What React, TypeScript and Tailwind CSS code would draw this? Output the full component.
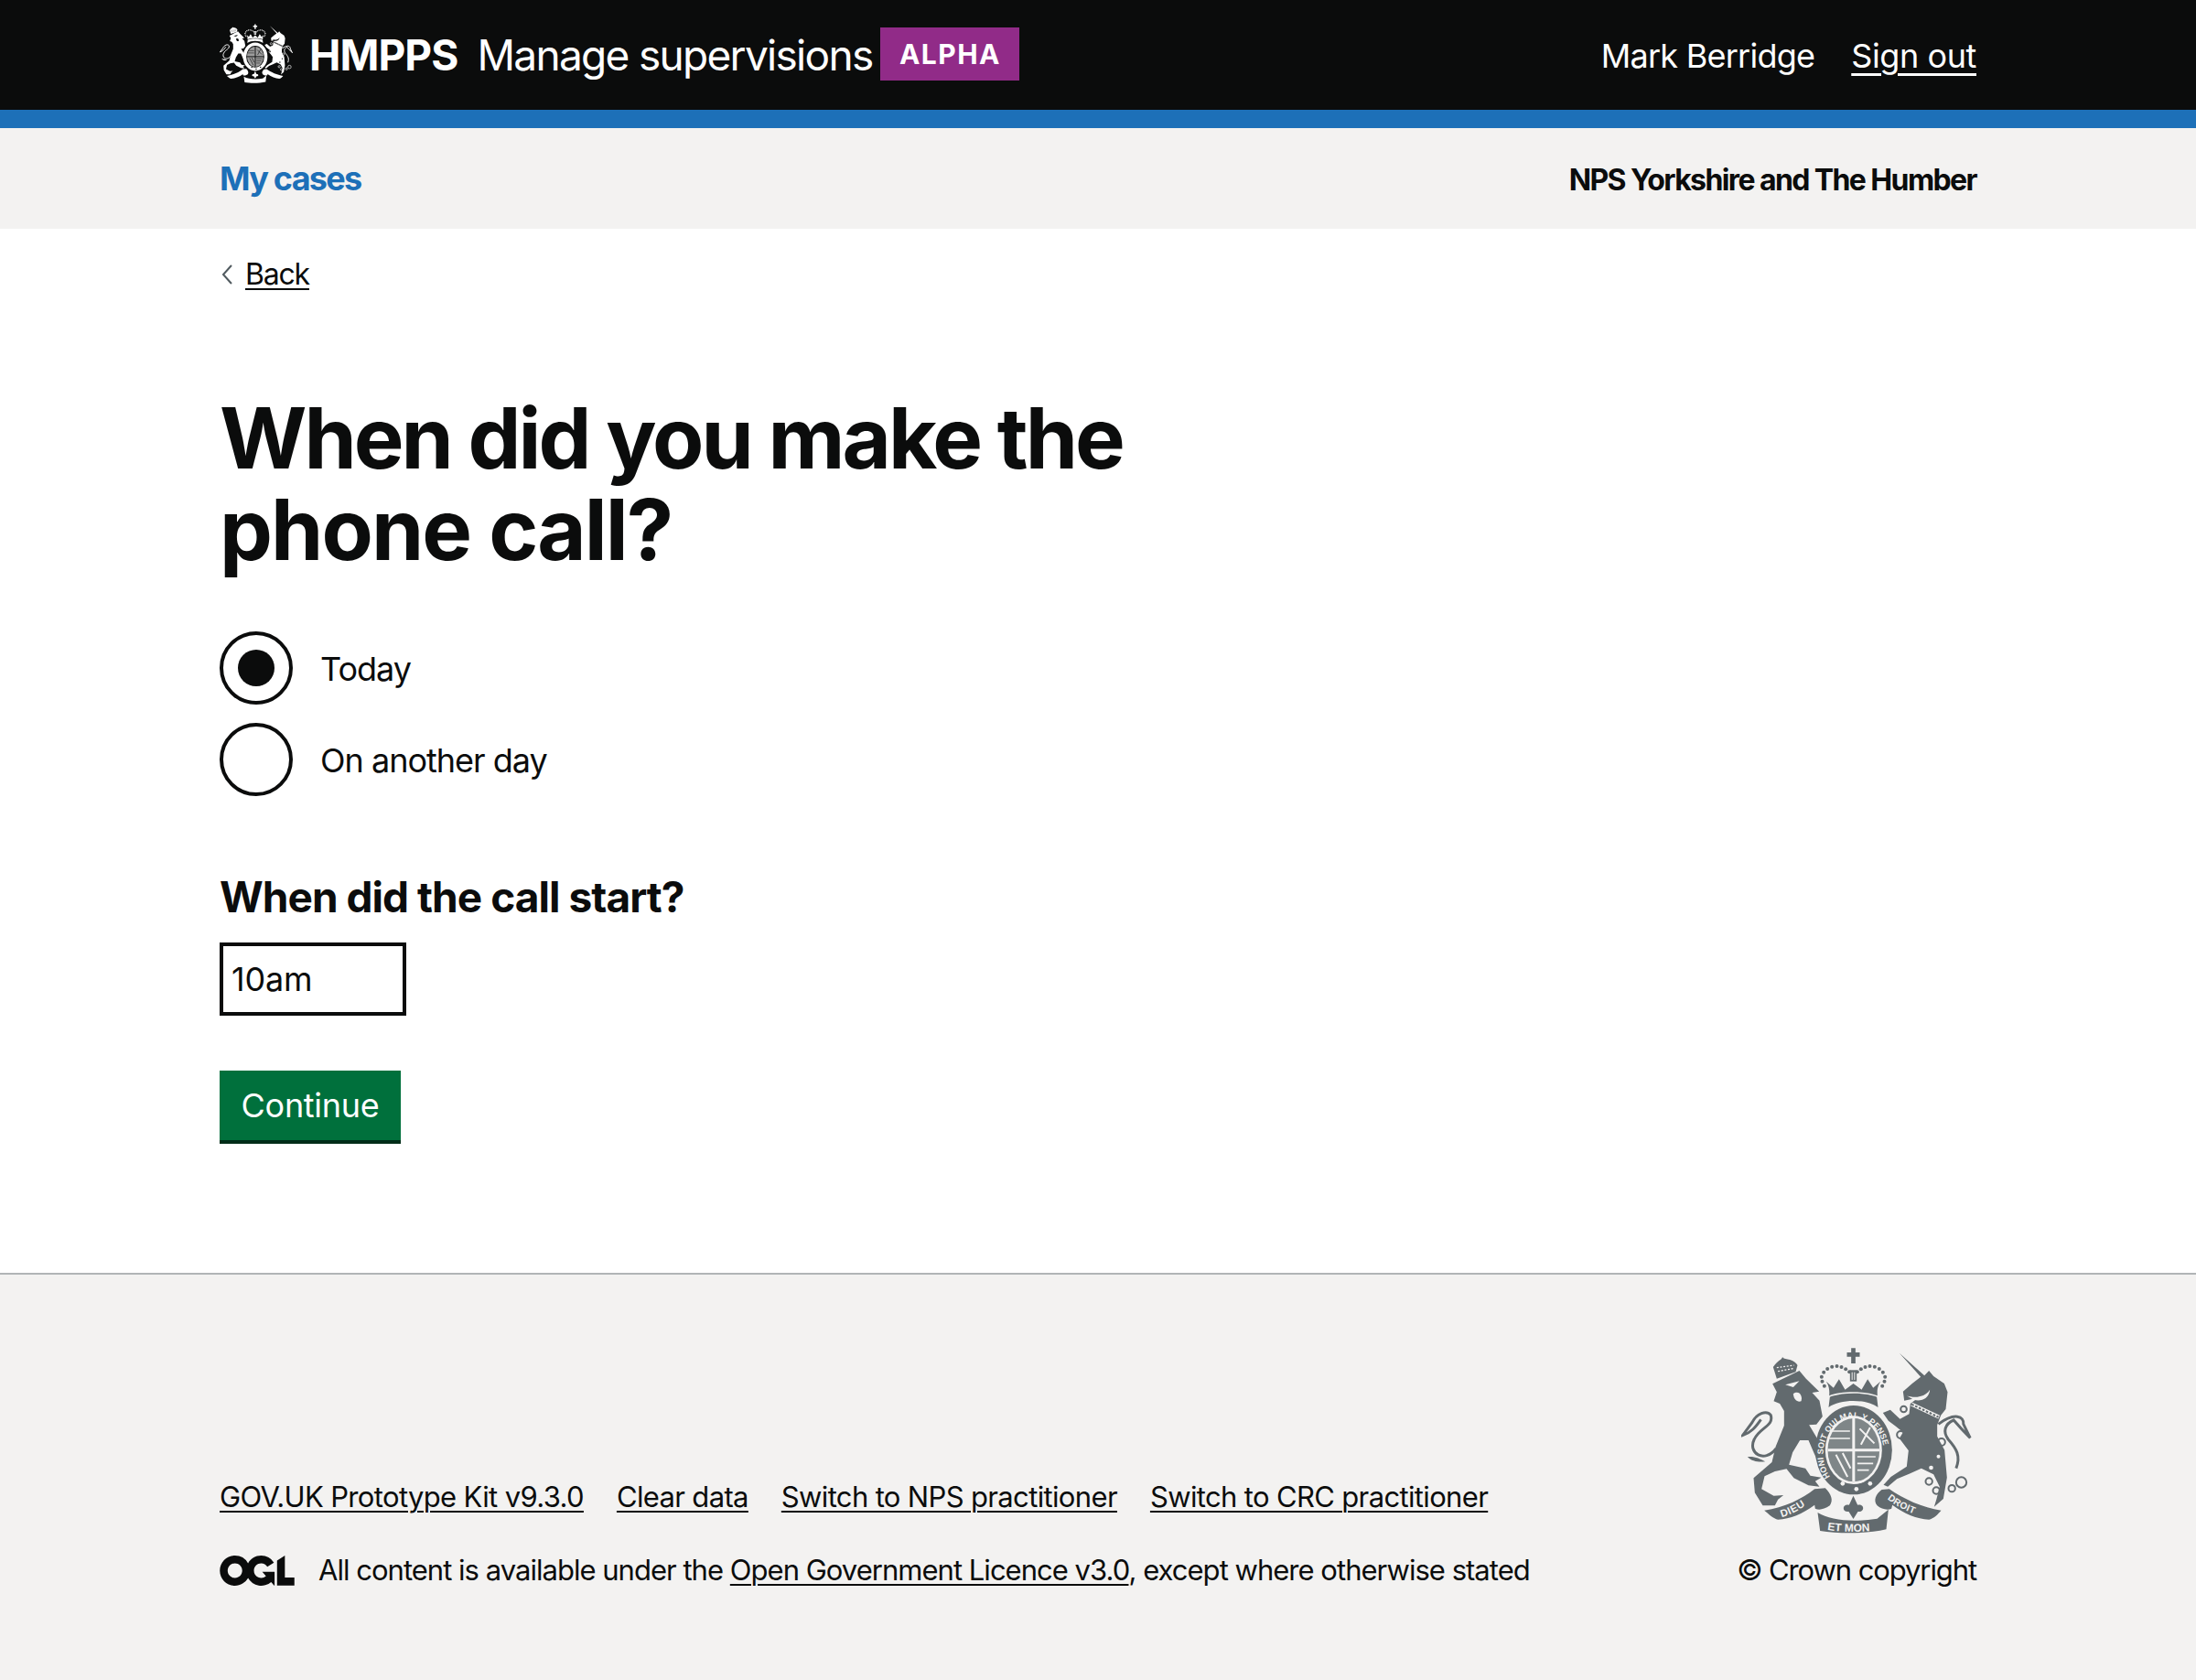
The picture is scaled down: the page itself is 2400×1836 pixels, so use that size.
const FONT = "font-['Inter','Noto_Sans',sans-serif]"

// hand drawn royal arms, coordinates are traced from the footer logo
function Crest({ className, bg, detail }: { className: string; bg: string; detail?: boolean }) {
  const dots = [
    [395, 205], [393, 190], [400, 175], [412, 164], [427, 157], [443, 155], [458, 158], [472, 165], [484, 174],
    [599, 205], [601, 190], [594, 175], [582, 164], [567, 157], [551, 155], [536, 158], [522, 165], [510, 174],
    [402, 220], [592, 220],
  ]
  const motto = { fill: bg, fontWeight: 700, fontFamily: 'Liberation Sans, sans-serif' }
  return (
    <svg viewBox="130 95 755 615" className={className} fill="currentColor">
      {/* lion */}
      <path d="M232 213 L320 170 L342 196 L385 238 L362 242 L386 268 L396 320 L376 346 L352 348 L405 436 L398 458 L380 466 L368 440 L350 398 L322 398 L298 438 L286 478 L340 490 L356 514 L392 520 L372 532 L386 550 L350 546 L302 522 L278 492 L240 500 L206 516 L196 558 L236 580 L268 578 L250 592 L240 612 L200 612 L174 570 L170 522 L230 470 L242 420 L270 350 L270 302 L256 278 L236 270 L246 240 Z" />
      <path d="M274 216 L320 204 L300 224 Z" fill={bg} />
      <path d="M300 246 C316 234 332 248 326 270 C312 274 302 264 300 246 Z" fill={bg} />
      <path d="M244 425 C205 475 150 440 172 395 C190 355 238 352 226 315 C212 298 180 310 165 340 L134 382 C165 372 178 352 194 330" fill="none" stroke="currentColor" strokeWidth="9" />
      <path d="M150 452 C175 450 190 458 208 468 C185 470 165 468 150 452 Z" />
      {/* lion crown */}
      <path d="M234 158 C250 135 262 135 265 125 C268 135 300 128 314 152 L308 174 L246 196 Z" />
      <path d="M246 160 L302 152 M250 172 L304 162" fill="none" stroke={bg} strokeWidth="4" strokeDasharray="6 5" />
      {/* royal crown */}
      <path d="M490 96 H504 V110 H518 V124 H504 V146 H490 V124 H476 V110 H490 Z" />
      <path d="M418 252 C420 225 414 216 408 205 L432 226 L450 198 L470 232 L497 212 L524 232 L544 198 L562 226 L586 205 C580 216 574 225 576 252 C540 236 454 236 418 252 Z" />
      <path d="M486 168 H508 V205 H486 Z" />
      <path d="M493 175 V200 M501 175 V200" stroke={bg} strokeWidth="3" />
      <path d="M420 256 C460 240 534 240 574 256 L578 290 C540 262 454 262 416 290 Z" />
      {dots.map(([cx, cy]) => <circle key={`${cx}-${cy}`} cx={cx} cy={cy} r="6" />)}
      {/* garter and shield */}
      <ellipse cx="498" cy="430" rx="126" ry="146" />
      <path id="garterPath" d="M424 522 A100 118 0 1 1 572 522" fill="none" />
      <ellipse cx="498" cy="430" rx="93" ry="112" fill={bg} />
      <ellipse cx="498" cy="430" rx="85" ry="104" opacity={detail ? 0.8 : 0.6} />
      <path d="M498 326 V534 M413 430 H583" stroke={bg} strokeWidth="9" />
      <path d="M425 368 H486 M418 392 H486 M510 452 H570 M510 474 H562 M510 496 H548" stroke={bg} strokeWidth="5" />
      <path d="M440 445 L478 518 M462 440 L488 490" stroke={bg} strokeWidth="6" />
      <path d="M518 360 L566 408 M552 356 L522 412" stroke={bg} strokeWidth="6" />
      {detail && (
        <text {...motto} fontSize="27" letterSpacing="0.5">
          <textPath href="#garterPath" startOffset="1%">HONI SOIT QUI MAL Y PENSE</textPath>
        </text>
      )}
      <circle cx="462" cy="540" r="7" fill={bg} />
      <circle cx="507" cy="558" r="7" fill={bg} />
      <circle cx="552" cy="540" r="7" fill={bg} />
      {/* unicorn */}
      <path d="M648 112 L730 186 L745 170 L760 188 L795 212 L806 240 L800 296 L784 316 L772 348 L772 385 L796 430 L804 520 L792 590 L762 616 L770 590 L780 550 L760 510 L720 490 L680 508 L640 525 L610 550 L596 544 L620 518 L672 484 L678 432 L648 392 L660 372 L636 352 L612 334 L594 308 L618 298 L650 328 L680 312 L684 278 L705 262 L692 262 L664 268 L660 238 L690 212 L718 190 Z" />
      <path d="M672 252 C700 262 735 255 748 232 C745 262 720 272 695 265 Z" fill={bg} />
      <path d="M688 280 L778 322" stroke={bg} strokeWidth="12" />
      <path d="M688 280 L776 322" stroke="currentColor" strokeWidth="6" strokeDasharray="8 5" />
      <path d="M776 345 C830 305 860 320 858 345 L880 390 C862 372 850 360 826 332 C796 345 790 370 808 395 C835 425 850 450 834 490" fill="none" stroke="currentColor" strokeWidth="9" />
      <circle cx="662" cy="296" r="10" fill="none" stroke="currentColor" strokeWidth="6" />
      <circle cx="652" cy="380" r="12" fill="none" stroke="currentColor" strokeWidth="6" />
      <circle cx="786" cy="404" r="12" fill="none" stroke="currentColor" strokeWidth="6" />
      <circle cx="745" cy="533" r="11" fill="none" stroke="currentColor" strokeWidth="6" />
      <circle cx="769" cy="563" r="11" fill="none" stroke="currentColor" strokeWidth="6" />
      <circle cx="820" cy="556" r="11" fill="none" stroke="currentColor" strokeWidth="6" />
      <circle cx="851" cy="536" r="17" fill="none" stroke="currentColor" strokeWidth="6" />
      <circle cx="776" cy="451" r="6" fill={bg} />
      <circle cx="752" cy="488" r="7" fill={bg} />
      {/* motto ribbon */}
      <path d="M205 628 C270 620 330 590 370 558 L405 555 C425 575 432 595 420 612 C400 625 385 628 372 622 L370 610 C330 640 290 655 250 658 C235 655 220 640 205 628 Z" />
      <path d="M785 628 C725 620 660 590 615 558 L590 560 C570 575 562 595 575 612 C590 625 610 628 622 622 L625 610 C665 640 705 655 745 658 C760 655 775 640 785 628 Z" />
      <path d="M380 635 C420 660 497 668 575 655 L612 625 L605 690 C540 705 450 705 388 695 Z" />
      <path d="M497 580 L511 610 C535 605 535 635 512 632 L497 656 L482 632 C459 635 459 605 483 610 Z" />
      {detail && (
        <>
          <path id="dieuText" d="M262 650 C300 640 340 615 375 585" fill="none" />
          <path id="droitText" d="M608 590 C640 618 690 640 750 656" fill="none" />
          <path id="etMonText" d="M412 692 C460 700 530 700 590 690" fill="none" />
          <text {...motto} fontSize="34" letterSpacing="2">
            <textPath href="#dieuText">DIEU</textPath>
          </text>
          <text {...motto} fontSize="31" letterSpacing="1">
            <textPath href="#droitText">DROIT</textPath>
          </text>
          <text {...motto} fontSize="36">
            <textPath href="#etMonText">ET MON</textPath>
          </text>
        </>
      )}
    </svg>
  )
}

function OglLogo() {
  return (
    <svg viewBox="0 0 483.2 195.7" className="w-[82px] h-[33px] shrink-0 text-[#0b0c0c]" fill="currentColor">
      <path d="M421.5 142.8V.1l-50.7 32.3v161.1h112.4v-50.7zm-122.3-9.6A47.12 47.12 0 0 1 221 97.8c0-26 21.1-47.1 47.1-47.1 16.7 0 31.4 8.7 39.7 21.8l42.7-27.2A97.63 97.63 0 0 0 268.1 0c-36.5 0-68.3 20.1-85.1 49.7A98 98 0 0 0 97.8 0C43.9 0 0 43.9 0 97.8s43.9 97.8 97.8 97.8c36.5 0 68.3-20.1 85.1-49.7a97.76 97.76 0 0 0 149.6 25.4l19.4 22.2h3v-87.8h-80l24.3 27.5zM97.8 145c-26 0-47.1-21.1-47.1-47.1s21.1-47.1 47.1-47.1 47.2 21 47.2 47S123.8 145 97.8 145" />
    </svg>
  )
}

function Radio({ label, checked }: { label: string; checked?: boolean }) {
  return (
    <label className="flex items-center h-[80px] gap-[30px]">
      <span className="flex items-center justify-center w-[80px] h-[80px] rounded-full border-[4px] border-[#0b0c0c] bg-white">
        {checked && <span className="w-[40px] h-[40px] rounded-full bg-[#0b0c0c]" />}
      </span>
      <span className="text-[36px] leading-[50px] tracking-[-1px] text-[#0b0c0c] mt-[1px]">{label}</span>
    </label>
  )
}

export default function App() {
  return (
    <div className={`${FONT} min-h-[1836px] flex flex-col bg-white text-[#0b0c0c]`}>
      <header className="h-[140px] bg-[#0b0c0c] border-b-[20px] border-[#1d70b8] text-white">
        <div className="w-[1920px] mx-auto h-[120px] flex items-center justify-between">
          <div className="flex items-center">
            <Crest className="w-[80px] h-[66px] mr-[18px] -mt-[2px]" bg="#0b0c0c" />
            <span className="text-[46px] font-bold tracking-[-0.9px] mt-[1px] mr-[21px]">HMPPS</span>
            <span className="text-[46px] tracking-[-1.7px] mt-[1px] mr-[9px]">Manage supervisions</span>
            <span className="h-[58px] -mt-[3px] w-[152px] flex items-center justify-center bg-[#912b88] text-[30px] leading-none font-bold tracking-[1.5px]">ALPHA</span>
          </div>
          <div className="flex items-center gap-[40px] text-[36px] mt-[1px]">
            <span className="tracking-[-0.75px]">Mark Berridge</span>
            <a href="#" className="underline decoration-[3px] underline-offset-[6px] tracking-[-0.4px]">Sign out</a>
          </div>
        </div>
      </header>

      <nav className="h-[110px] bg-[#f3f2f1]">
        <div className="w-[1920px] mx-auto h-full flex items-center justify-between">
          <a href="#" className="text-[36px] font-bold tracking-[-1.75px] text-[#1d70b8]">My cases</a>
          <span className="text-[32px] font-bold tracking-[-1.6px] mt-[3px]">NPS Yorkshire and The Humber</span>
        </div>
      </nav>

      <main className="w-[1920px] mx-auto flex-1">
        <a href="#" className="flex items-center gap-[16px] mt-[30px] h-[40px]">
          <svg viewBox="0 0 12 22" className="w-[12px] h-[22px] ml-[2px] text-[#505a5f]" fill="none" stroke="currentColor" strokeWidth="2">
            <path d="M11 1 L2 11 L11 21" />
          </svg>
          <span className="-ml-[2px] text-[32px] leading-[40px] underline decoration-[2px] underline-offset-[4px] tracking-[-1.2px]">Back</span>
        </a>
        <h1 className="mt-[109px] w-[1200px] text-[92px] leading-[100px] font-bold tracking-[-3px]">When did you make the <span className="tracking-[-1.9px]">phone call?</span></h1>
        <div className="mt-[61px] flex flex-col gap-[20px]">
          <Radio label="Today" checked />
          <Radio label="On another day" />
        </div>
        <h2 className="mt-[80px] text-[46px] leading-[60px] font-bold tracking-[-0.95px]">When did the call start?</h2>
        <input
          defaultValue="10am"
          className="block mt-[20px] w-[204px] h-[80px] border-[4px] border-[#0b0c0c] px-[9px] text-[36px] tracking-[-0.2px] outline-none"
        />
        <button className="block mt-[60px] w-[198px] h-[80px] bg-[#00703c] border-b-[4px] border-[#002d18] text-white text-[36px] tracking-[-0.3px]">Continue</button>
      </main>

      <footer className="h-[445px] bg-[#f3f2f1] border-t-[2px] border-[#b1b4b6] pt-[80px] pb-[100px]">
        <div className="w-[1920px] mx-auto h-full flex items-end justify-between">
          <div className="text-[#0b0c0c] text-[31px] leading-[40px] tracking-[-0.65px]">
            <ul className="flex gap-[36px]">
              <li><a href="#" className="underline decoration-[2px] underline-offset-[4px]">GOV.UK Prototype Kit v9.3.0</a></li>
              <li><a href="#" className="underline decoration-[2px] underline-offset-[4px]">Clear data</a></li>
              <li><a href="#" className="underline decoration-[2px] underline-offset-[4px]">Switch to NPS practitioner</a></li>
              <li><a href="#" className="underline decoration-[2px] underline-offset-[4px]">Switch to CRC practitioner</a></li>
            </ul>
            <div className="mt-[40px] flex items-center gap-[26px]">
              <OglLogo />
              <span className="tracking-[-0.98px]">All content is available under the <a href="#" className="underline decoration-[2px] underline-offset-[4px]">Open Government Licence v3.0</a>, except where otherwise stated</span>
            </div>
          </div>
          <div className="flex flex-col items-end">
            <Crest className="w-[252px] h-[205px] text-[#626a6e] mr-[5px] mb-[18px]" bg="#f3f2f1" detail />
            <span className="text-[31px] leading-[40px] tracking-[-1.1px]">© Crown copyright</span>
          </div>
        </div>
      </footer>
    </div>
  )
}
